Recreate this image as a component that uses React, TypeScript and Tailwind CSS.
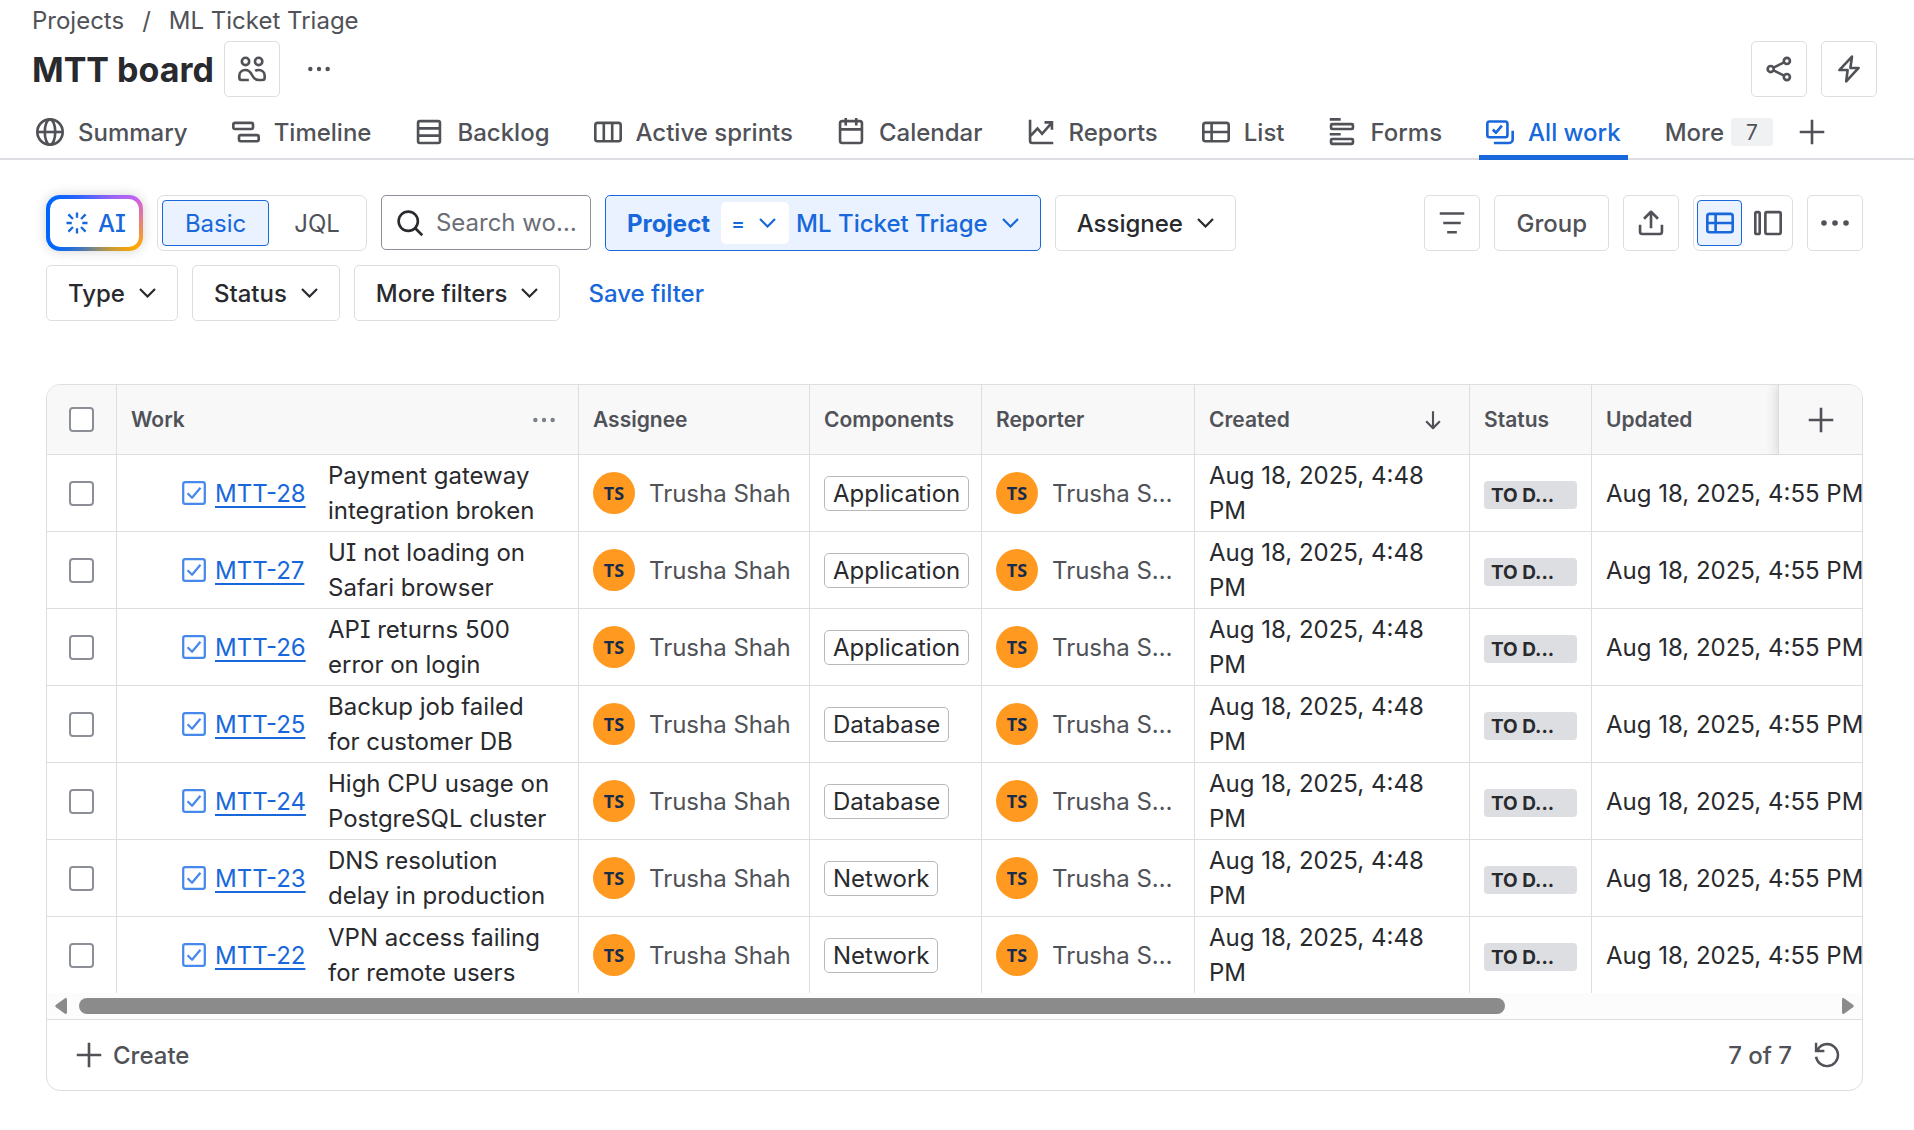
import type { ReactNode } from "react";

type IconProps = { className?: string; children: ReactNode; strokeWidth?: number };

function Icon({ className = "size-7", children, strokeWidth = 1.5 }: IconProps) {
  return (
    <svg
      viewBox="0 0 16 16"
      fill="none"
      stroke="currentColor"
      strokeWidth={strokeWidth}
      strokeLinejoin="round"
      aria-hidden="true"
      className={`shrink-0 overflow-visible ${className}`}
    >
      {children}
    </svg>
  );
}

const GlobeIcon = () => (
  <Icon>
    <circle cx="8" cy="8" r="7.25" />
    <ellipse cx="8" cy="8" rx="3" ry="7.25" />
    <path d="M.75 8h14.5" />
  </Icon>
);

const TimelineIcon = () => (
  <Icon>
    <rect x=".75" y="2.75" width="11.25" height="3.5" rx="1" />
    <rect x="4" y="9.75" width="11.25" height="3.5" rx="1" />
  </Icon>
);

const BacklogIcon = () => (
  <Icon>
    <rect x="1.75" y="1.75" width="12.5" height="12.5" rx="1" />
    <path d="M1.75 5.9h12.5M1.75 10.1h12.5" />
  </Icon>
);

const BoardIcon = () => (
  <Icon>
    <rect x=".75" y="2.75" width="14.5" height="10.5" rx="1.25" />
    <path d="M5.6 2.75v10.5M10.4 2.75v10.5" />
  </Icon>
);

const CalendarIcon = () => (
  <Icon>
    <rect x="1.75" y="1.75" width="12.5" height="12.5" rx="1.25" />
    <path d="M1.75 6.5h12.5M5 0v4.25M11 0v4.25" />
  </Icon>
);

const ReportsIcon = () => (
  <Icon>
    <path d="M1.75 1v12c0 .7.5 1.25 1.25 1.25h12M2 10.2l4-4.2 2.6 3L14 2.9M10 2.5h4.25v4.25" strokeLinejoin="miter" />
  </Icon>
);

const TableIcon = () => (
  <Icon>
    <rect x=".75" y="2.75" width="14.5" height="10.5" rx="1.25" />
    <path d="M.75 8h14.5M5.5 2.75v10.5" />
  </Icon>
);

const FormsIcon = () => (
  <Icon>
    <path d="M1 .75h6.25M1 9.25h6.25" />
    <rect x="1.75" y="3.5" width="12.5" height="2.75" rx=".6" />
    <rect x="1.75" y="12" width="12.5" height="2.75" rx=".6" />
  </Icon>
);

const AllWorkIcon = () => (
  <Icon>
    <rect x=".75" y="2" width="11.5" height="9" rx="1.25" />
    <path d="M3.9 6.6l1.8 1.8 3.4-4" />
    <path d="M15.25 7.25v5c0 1.1-.9 2-2 2H4.5" />
  </Icon>
);

const PlusIcon = () => (
  <Icon>
    <path d="M8 1v14M1 8h14" />
  </Icon>
);

const PeopleIcon = () => (
  <Icon>
    <circle cx="4.3" cy="3.7" r="2.1" />
    <circle cx="11.8" cy="3.7" r="2.1" />
    <path d="M6.2 14.3H2c-.7 0-1.25-.5-1.25-1.25v-1.1C.75 10 2.2 8.6 4.2 8.6c2.1 0 3 1.2 3.8 2.85.8 1.65 1.7 2.85 3.8 2.85h2.2c.7 0 1.25-.5 1.25-1.25v-1.1c0-1.95-1.45-3.35-3.45-3.35-.8 0-1.5.15-2 .5" />
  </Icon>
);

const ShareIcon = () => (
  <Icon>
    <circle cx="3.25" cy="8" r="1.75" />
    <circle cx="12.5" cy="3.4" r="1.75" />
    <circle cx="12.5" cy="12.6" r="1.75" />
    <path d="M4.9 7.2l6-3M4.9 8.8l6 3" />
  </Icon>
);

const BoltIcon = () => (
  <Icon>
    <path d="M9.7.9L2.5 8.6h4.7l-.8 6.5 7.1-7.7H8.8z" />
  </Icon>
);

const SearchIcon = () => (
  <Icon>
    <circle cx="7" cy="7" r="5.5" />
    <path d="M11 11l4 4" />
  </Icon>
);

const SortLinesIcon = () => (
  <Icon>
    <path d="M1 2.6h14M3 8h10M5.25 13.3h5.5" strokeWidth="1.4" />
  </Icon>
);

const UploadIcon = () => (
  <Icon>
    <path d="M1.75 9v4c0 .7.5 1.25 1.25 1.25h10c.7 0 1.25-.5 1.25-1.25V9M8 11V1.8M4 5.6l4-4 4 4" />
  </Icon>
);

const PanelIcon = () => (
  <Icon>
    <rect x=".75" y="1.75" width="2.5" height="12.5" rx=".75" />
    <rect x="6.5" y="1.75" width="8.75" height="12.5" rx=".9" />
  </Icon>
);

const RefreshIcon = () => (
  <Icon>
    <path d="M1.75 9A6.3 6.3 0 1 0 8 1.75 6.4 6.4 0 0 0 2.6 5.2M1.75 1v4.75H6.5" strokeLinejoin="miter" strokeWidth="1.4" />
  </Icon>
);

const SparkIcon = () => (
  <Icon strokeWidth={1.35}>
    <path d="M8 2v3M8 11v3M2 8h3M11 8h3M3.1 3.1l2.6 2.6M10.3 10.3l2.6 2.6M12.9 3.1l-2.6 2.6M5.7 10.3l-2.6 2.6" />
  </Icon>
);

const ArrowDownIcon = () => (
  <Icon className="size-5" strokeWidth={1.7}>
    <path d="M8 1v13.5M2.5 9L8 14.5 13.500 9" />
  </Icon>
);

const TaskIcon = () => (
  <Icon className="size-6 text-[#4688ec]">
    <rect x=".8" y=".8" width="14.4" height="14.4" rx="1.4" />
    <path d="M3.7 8.2l3 3 5.600-6.700" />
  </Icon>
);

const Chevron = () => (
  <svg viewBox="0 0 17 10" fill="none" stroke="currentColor" strokeWidth="2.2" aria-hidden="true" className="h-2.5 w-[17px] shrink-0">
    <path d="M1 1l7.500 7.500L16 1" />
  </svg>
);

function Dots({ small = false }: { small?: boolean }) {
  return (
    <Icon className={small ? "size-[22px]" : "size-7"}>
      <g fill="currentColor" stroke="none">
        <circle cx="1.7" cy="8" r="1.6" />
        <circle cx="8" cy="8" r="1.6" />
        <circle cx="14.3" cy="8" r="1.6" />
      </g>
    </Icon>
  );
}

function IconButton({ label, children }: { label: string; children: ReactNode }) {
  return (
    <button
      type="button"
      aria-label={label}
      className="flex size-14 shrink-0 items-center justify-center rounded-[5px] border border-[#dddee1] text-[#505258]"
    >
      {children}
    </button>
  );
}

function FilterButton({ children }: { children: ReactNode }) {
  return (
    <button
      type="button"
      className="flex h-14 items-center gap-3.5 rounded-[5px] border border-[#dddee1] px-[21px] font-medium text-[#292a2e]"
    >
      {children}
      <Chevron />
    </button>
  );
}

const tabs = [
  { name: "Summary", icon: <GlobeIcon /> },
  { name: "Timeline", icon: <TimelineIcon /> },
  { name: "Backlog", icon: <BacklogIcon /> },
  { name: "Active sprints", icon: <BoardIcon /> },
  { name: "Calendar", icon: <CalendarIcon /> },
  { name: "Reports", icon: <ReportsIcon /> },
  { name: "List", icon: <TableIcon /> },
  { name: "Forms", icon: <FormsIcon /> },
  { name: "All work", icon: <AllWorkIcon />, active: true },
];

const rows = [
  { id: "MTT-28", summary: "Payment gateway integration broken", component: "Application" },
  { id: "MTT-27", summary: "UI not loading on Safari browser", component: "Application" },
  { id: "MTT-26", summary: "API returns 500 error on login", component: "Application" },
  { id: "MTT-25", summary: "Backup job failed for customer DB", component: "Database" },
  { id: "MTT-24", summary: "High CPU usage on PostgreSQL cluster", component: "Database" },
  { id: "MTT-23", summary: "DNS resolution delay in production", component: "Network" },
  { id: "MTT-22", summary: "VPN access failing for remote users", component: "Network" },
];

function Checkbox({ label }: { label: string }) {
  return (
    <input
      type="checkbox"
      aria-label={label}
      className="mx-auto block size-[25px] appearance-none rounded-[4px] border-2 border-[#8c8f97] bg-white checked:bg-[#1868db]"
    />
  );
}

function Person() {
  return (
    <div className="flex items-center gap-3.5">
      <span className="flex size-[42px] shrink-0 items-center justify-center rounded-full bg-[#ff991f] font-['Noto_Sans',sans-serif] text-[18px] font-bold text-[#172b4d]">
        TS
      </span>
      <span className="truncate text-[#505258]">Trusha Shah</span>
    </div>
  );
}

const th = "h-[70px] border-r border-b border-[#dddee1] px-3.5 text-left font-semibold";
const td = "h-[77px] border-r border-b border-[#dddee1] px-3.5 group-last:h-[76px] group-last:border-b-0";

export default function App() {
  return (
    <div className="bg-white pb-10 font-[Inter,sans-serif] text-[24px] leading-[35px] text-[#292a2e] [font-feature-settings:'cv08']">
      <header>
        <div className="pt-[3px] pr-[37px] pl-8">
          <nav aria-label="Breadcrumb" className="flex gap-[18px] text-[#505258]">
            <a href="#projects">Projects</a>
            <span>/</span>
            <a href="#ml-ticket-triage">ML Ticket Triage</a>
          </nav>
          <div className="mt-[3px] flex items-center">
            <h1 className="text-[34px] font-bold">MTT board</h1>
            <div className="ml-2.5">
              <IconButton label="Team">
                <PeopleIcon />
              </IconButton>
            </div>
            <button type="button" aria-label="More actions" className="ml-7 text-[#505258]">
              <Dots small />
            </button>
            <div className="ml-auto flex gap-3.5">
              <IconButton label="Share">
                <ShareIcon />
              </IconButton>
              <IconButton label="Automation">
                <BoltIcon />
              </IconButton>
            </div>
          </div>
        </div>
        <nav aria-label="Project views" className="mt-[7px] flex h-14 border-b-2 border-[#dddee1] pl-[29px] font-medium text-[#505258]">
          <div className="-mb-0.5 flex gap-[30px]">
            {tabs.map((tab) => (
              <a
                key={tab.name}
                href="#view"
                aria-current={tab.active ? "page" : undefined}
                className={
                  tab.active
                    ? "relative flex items-center gap-3.5 px-[7px] whitespace-nowrap text-[#1868db] after:absolute after:inset-x-0 after:bottom-0 after:h-[5px] after:bg-[#1868db]"
                    : "flex items-center gap-3.5 px-[7px] whitespace-nowrap"
                }
              >
                {tab.icon}
                {tab.name}
              </a>
            ))}
            <button type="button" className="flex items-center gap-[7px] px-[7px] font-medium">
              More
              <span className="flex h-7 w-[42px] items-center justify-center rounded-[4px] bg-[#f0f1f2] text-[21px] font-normal">7</span>
            </button>
            <button type="button" aria-label="Add view" className="-ml-3">
              <PlusIcon />
            </button>
          </div>
        </nav>
      </header>

      <main className="pt-[35px] pr-[51px] pl-[46px]">
        <section aria-label="Filters" className="flex items-start gap-14">
          <div className="flex flex-1 flex-wrap gap-3.5">
            <button
              type="button"
              className="flex h-14 rounded-[14px] bg-[conic-gradient(from_60deg,#cf60e8_0deg,#ffa900_60deg,#0065ff_180deg,#0065ff_240deg,#bf63f3_360deg)] p-1 font-medium text-[#1868db] shadow-[0_0_12px_rgba(30,31,33,0.2)]"
            >
              <span className="flex h-full items-center gap-[7px] rounded-[10px] bg-white px-[13px]">
                <SparkIcon />
                AI
              </span>
            </button>
            <div role="group" aria-label="Search mode" className="flex h-14 gap-[3px] rounded-[7px] border border-[#dddee1] p-1">
              <button type="button" aria-pressed="true" className="rounded-[4px] border border-[#1868db] bg-[#e9f2fe] px-[22px] text-[#1868db]">
                Basic
              </button>
              <button type="button" className="px-[22px] text-[#505258]">
                JQL
              </button>
            </div>
            <label className="flex h-[55px] w-[210px] items-center gap-3 rounded-[5px] border border-[#8c8f97] pr-2.5 pl-3.5">
              <SearchIcon />
              <input
                type="text"
                aria-label="Search work"
                placeholder="Search work items"
                className="w-full min-w-0 text-ellipsis outline-none placeholder:text-[#6b6e76]"
              />
            </label>
            <div className="flex h-14 items-center rounded-[5px] border border-[#1868db] bg-[#e9f2fe] px-[21px] font-medium text-[#1868db]">
              <span className="font-bold">Project</span>
              <button type="button" aria-label="Equals" className="mr-[7px] ml-[11px] flex h-[42px] items-center gap-3.5 rounded-[5px] bg-white pr-[13px] pl-2.5 text-[21px]">
                =
                <Chevron />
              </button>
              <button type="button" className="flex items-center gap-3.5 font-medium">
                ML Ticket Triage
                <Chevron />
              </button>
            </div>
            <FilterButton>Assignee</FilterButton>
            <FilterButton>Type</FilterButton>
            <FilterButton>Status</FilterButton>
            <FilterButton>More filters</FilterButton>
            <button type="button" className="px-3.5 font-medium text-[#1868db]">
              Save filter
            </button>
          </div>
          <div className="flex gap-3.5">
            <IconButton label="Sort">
              <SortLinesIcon />
            </IconButton>
            <button type="button" className="h-14 rounded-[5px] border border-[#dddee1] px-[21px] font-medium text-[#505258]">
              Group
            </button>
            <IconButton label="Export">
              <UploadIcon />
            </IconButton>
            <div role="group" aria-label="Layout" className="flex h-14 gap-1 rounded-[7px] border border-[#dddee1] p-[3px] py-1">
              <button type="button" aria-label="Table view" aria-pressed="true" className="flex w-[45px] items-center justify-center rounded-[4px] border border-[#1868db] bg-[#e9f2fe] text-[#1868db]">
                <TableIcon />
              </button>
              <button type="button" aria-label="Detail view" className="flex w-[43px] items-center justify-center text-[#505258]">
                <PanelIcon />
              </button>
            </div>
            <IconButton label="More options">
              <Dots />
            </IconButton>
          </div>
        </section>

        <section aria-label="Work items" className="mt-[63px] overflow-hidden rounded-[14px] border border-[#dddee1]">
          <div className="overflow-x-auto [scrollbar-width:none]">
            <table className="w-[2250px] table-fixed border-separate border-spacing-0">
              <colgroup>
                <col className="w-[70px]" />
                <col className="w-[462px]" />
                <col className="w-[231px]" />
                <col className="w-[172px]" />
                <col className="w-[213px]" />
                <col className="w-[275px]" />
                <col className="w-[122px]" />
                <col />
                <col className="w-[84px]" />
              </colgroup>
              <thead className="bg-[#f8f8f8] text-[21px] text-[#505258]">
                <tr>
                  <th className={th}>
                    <Checkbox label="Select all" />
                  </th>
                  <th className={th}>
                    <div className="flex items-center justify-between pr-[9px]">
                      Work
                      <button type="button" aria-label="Work column options" className="text-[#7d818a]">
                        <Dots small />
                      </button>
                    </div>
                  </th>
                  <th className={th}>Assignee</th>
                  <th className={th}>Components</th>
                  <th className={th}>Reporter</th>
                  <th className={th}>
                    <div className="flex items-center justify-between pr-3">
                      Created
                      <ArrowDownIcon />
                    </div>
                  </th>
                  <th className={th}>Status</th>
                  <th className={th}>Updated</th>
                  <th className="sticky right-0 border-b border-l border-[#dddee1] bg-[#f8f8f8] shadow-[0_0_12px_rgba(30,31,33,0.2)] [clip-path:inset(0_0_0_-16px)]">
                    <button type="button" aria-label="Add column" className="flex w-full justify-center">
                      <PlusIcon />
                    </button>
                  </th>
                </tr>
              </thead>
              <tbody>
                {rows.map((row) => (
                  <tr key={row.id} className="group">
                    <td className={td}>
                      <Checkbox label={`Select ${row.id}`} />
                    </td>
                    <td className={td}>
                      <div className="flex items-center pr-2 pl-[51px]">
                        <TaskIcon />
                        <a href="#item" className="ml-[9px] w-[113px] shrink-0 text-[#1868db] underline decoration-2 underline-offset-4">
                          {row.id}
                        </a>
                        <span>{row.summary}</span>
                      </div>
                    </td>
                    <td className={td}>
                      <Person />
                    </td>
                    <td className={td}>
                      <span className="inline-flex h-[35px] items-center rounded-[5px] border border-[#b7b9be] px-2">{row.component}</span>
                    </td>
                    <td className={td}>
                      <Person />
                    </td>
                    <td className={td}>Aug 18, 2025, 4:48 PM</td>
                    <td className={td}>
                      <span className="mt-1 flex h-7 items-center rounded-[4px] bg-[#dddee1] px-[7px] text-[19px] font-bold">TO D...</span>
                    </td>
                    <td className={td} colSpan={2}>
                      Aug 18, 2025, 4:55 PM
                    </td>
                  </tr>
                ))}
              </tbody>
            </table>
          </div>
          <div aria-hidden="true" className="flex h-[26px] items-center bg-[#fcfcfc] px-2 text-[#8b8b8b]">
            <svg viewBox="0 0 12 16" fill="currentColor" className="h-4 w-3">
              <path d="M12 1.500v13c0 1.200-1 1.800-2 1.200L1 9.200C.1 8.500.1 7.500 1 6.800L10 .3c1-.6 2 0 2 1.200z" />
            </svg>
            <div className="mr-[3px] ml-3 h-4 flex-1">
              <div className="h-4 w-[81%] rounded-full bg-[#8b8b8b]" />
            </div>
            <svg viewBox="0 0 12 16" fill="currentColor" className="h-4 w-3">
              <path d="M0 1.500v13c0 1.200 1 1.800 2 1.200L11 9.200c.9-.7.9-1.700 0-2.400L2 .3C1-.3 0 .3 0 1.500z" />
            </svg>
          </div>
          <footer className="flex h-[71px] items-center justify-between border-t border-[#dddee1] pr-[21px] pl-7 font-medium text-[#505258]">
            <button type="button" className="flex items-center gap-2.5 font-medium">
              <PlusIcon />
              Create
            </button>
            <div className="flex items-center gap-[21px]">
              7 of 7
              <button type="button" aria-label="Refresh">
                <RefreshIcon />
              </button>
            </div>
          </footer>
        </section>
      </main>
    </div>
  );
}
